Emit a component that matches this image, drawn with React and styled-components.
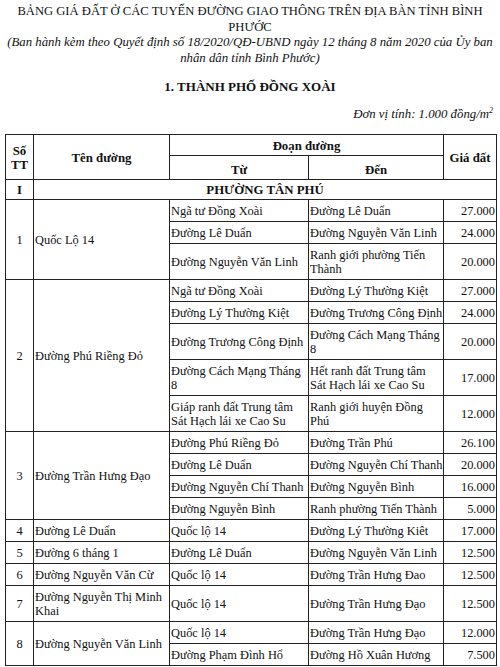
import React from 'react'
import styled, { createGlobalStyle } from 'styled-components'

const GlobalStyle = createGlobalStyle`
  html, body {
    margin: 0;
    padding: 0;
    background: #fff;
  }
  body {
    font-family: "Liberation Serif", "Times New Roman", serif;
    color: #111;
  }
`

const groups = [
  {
    stt: '1',
    name: 'Quốc Lộ 14',
    segments: [
      { from: 'Ngã tư Đồng Xoài', to: 'Đường Lê Duẩn', price: '27.000' },
      { from: 'Đường Lê Duẩn', to: 'Đường Nguyễn Văn Linh', price: '24.000' },
      { from: 'Đường Nguyễn Văn Linh', to: 'Ranh giới phường Tiến\nThành', price: '20.000', tall: true },
    ],
  },
  {
    stt: '2',
    name: 'Đường Phú Riềng Đỏ',
    segments: [
      { from: 'Ngã tư Đồng Xoài', to: 'Đường Lý Thường Kiệt', price: '27.000' },
      { from: 'Đường Lý Thường Kiệt', to: 'Đường Trương Công Định', price: '24.000' },
      { from: 'Đường Trương Công Định', to: 'Đường Cách Mạng Tháng\n8', price: '20.000', tall: true },
      { from: 'Đường Cách Mạng Tháng\n8', to: 'Hết ranh đất Trung tâm\nSát Hạch lái xe Cao Su', price: '17.000', tall: true },
      { from: 'Giáp ranh đất Trung tâm\nSát Hạch lái xe Cao Su', to: 'Ranh giới huyện Đồng\nPhú', price: '12.000', tall: true },
    ],
  },
  {
    stt: '3',
    name: 'Đường Trần Hưng Đạo',
    segments: [
      { from: 'Đường Phú Riềng Đỏ', to: 'Đường Trần Phú', price: '26.100' },
      { from: 'Đường Lê Duẩn', to: 'Đường Nguyễn Chí Thanh', price: '20.000' },
      { from: 'Đường Nguyễn Chí Thanh', to: 'Đường Nguyễn Bình', price: '16.000' },
      { from: 'Đường Nguyễn Bình', to: 'Ranh phường Tiến Thành', price: '5.000' },
    ],
  },
  {
    stt: '4',
    name: 'Đường Lê Duẩn',
    segments: [{ from: 'Quốc lộ 14', to: 'Đường Lý Thường Kiêt', price: '17.000' }],
  },
  {
    stt: '5',
    name: 'Đường 6 tháng 1',
    segments: [{ from: 'Đường Lê Duẩn', to: 'Đường Nguyễn Văn Linh', price: '12.500' }],
  },
  {
    stt: '6',
    name: 'Đường Nguyễn Văn Cừ',
    segments: [{ from: 'Quốc lộ 14', to: 'Đường Trần Hưng Đao', price: '12.500' }],
  },
  {
    stt: '7',
    name: 'Đường Nguyễn Thị Minh\nKhai',
    segments: [{ from: 'Quốc lộ 14', to: 'Đường Trần Hưng Đạo', price: '12.500', tall: true }],
  },
  {
    stt: '8',
    name: 'Đường Nguyễn Văn Linh',
    segments: [
      { from: 'Quốc lộ 14', to: 'Đường Trần Hưng Đạo', price: '12.000' },
      { from: 'Đường Phạm Đình Hổ', to: 'Đường Hồ Xuân Hương', price: '7.500' },
    ],
  },
]

function App() {
  return (
    <>
      <GlobalStyle />
      <Page>
        <Heading>
          <Title>
            BẢNG GIÁ ĐẤT Ở CÁC TUYẾN ĐƯỜNG GIAO THÔNG TRÊN ĐỊA BÀN TỈNH BÌNH PHƯỚC
          </Title>
          <Subtitle>
            (Ban hành kèm theo Quyết định số 18/2020/QĐ-UBND ngày 12 tháng 8 năm 2020 của Ủy ban nhân dân tỉnh Bình Phước)
          </Subtitle>
          <SectionTitle>1. THÀNH PHỐ ĐỒNG XOÀI</SectionTitle>
          <Unit>
            Đơn vị tính: 1.000 đồng/m<sup>2</sup>
          </Unit>
        </Heading>

        <PriceTable>
          <colgroup>
            <col style={{ width: 28 }} />
            <col style={{ width: 136 }} />
            <col style={{ width: 139 }} />
            <col style={{ width: 135 }} />
            <col style={{ width: 53 }} />
          </colgroup>
          <thead>
            <HeadRow $h={21}>
              <HeadCell rowSpan={2}>Số<br />TT</HeadCell>
              <HeadCell rowSpan={2}>Tên đường</HeadCell>
              <HeadCell colSpan={2}>Đoạn đường</HeadCell>
              <HeadCell rowSpan={2}>Giá đất</HeadCell>
            </HeadRow>
            <HeadRow $h={24}>
              <HeadCell $bottom>Từ</HeadCell>
              <HeadCell $bottom>Đến</HeadCell>
            </HeadRow>
          </thead>
          <tbody>
            <HeadRow $h={20}>
              <HeadCell>I</HeadCell>
              <HeadCell colSpan={4}>PHƯỜNG TÂN PHÚ</HeadCell>
            </HeadRow>
            {groups.map((g) =>
              g.segments.map((s, i) => (
                <Row key={g.stt + '-' + i} $tall={s.tall}>
                  {i === 0 && (
                    <>
                      <NumCell rowSpan={g.segments.length}>{g.stt}</NumCell>
                      <TextCell rowSpan={g.segments.length}>{g.name}</TextCell>
                    </>
                  )}
                  <TextCell>{s.from}</TextCell>
                  <TextCell>{s.to}</TextCell>
                  <PriceCell>{s.price}</PriceCell>
                </Row>
              ))
            )}
          </tbody>
        </PriceTable>
      </Page>
    </>
  )
}

const Page = styled.div`
  width: 500px;
  padding: 4px 0 0 0;
  box-sizing: border-box;
`

const Heading = styled.div`
  padding: 0 5px;
  display: flex;
  flex-direction: column;
`

const Title = styled.div`
  font-size: 12.6px;
  line-height: 15.5px;
  text-align: center;
`

const Subtitle = styled.div`
  font-size: 12.8px;
  line-height: 15.5px;
  font-style: italic;
  text-align: center;
`

const SectionTitle = styled.div`
  font-size: 13px;
  line-height: 15px;
  font-weight: 700;
  text-align: center;
  margin-top: 13px;
`

const Unit = styled.div`
  font-size: 12.8px;
  line-height: 15px;
  font-style: italic;
  text-align: right;
  margin-top: 13px;
  padding-right: 2px;

  sup {
    font-size: 8px;
    line-height: 0;
    vertical-align: 5px;
  }
`

const PriceTable = styled.table`
  border-collapse: collapse;
  table-layout: fixed;
  width: 491px;
  margin: 12px 0 0 5px;
  border: 1.5px solid #111;
`

const HeadRow = styled.tr`
  height: ${(p) => p.$h}px;
`

const Row = styled.tr`
  height: ${(p) => (p.$tall ? 36 : 22)}px;
`

const Cell = styled.td`
  border: 1px solid #222;
  font-size: 12.4px;
  line-height: 14px;
  padding: 1px 1px 0 1px;
  vertical-align: middle;
  white-space: pre;
  overflow: hidden;
`

const HeadCell = styled(Cell)`
  font-weight: 700;
  font-size: 12.8px;
  text-align: center;
  vertical-align: ${(p) => (p.$bottom ? 'bottom' : 'middle')};
  padding-bottom: ${(p) => (p.$bottom ? '2px' : '0')};
`

const NumCell = styled(Cell)`
  text-align: center;
`

const TextCell = styled(Cell)`
  text-align: left;
`

const PriceCell = styled(Cell)`
  text-align: right;
`

export default App
